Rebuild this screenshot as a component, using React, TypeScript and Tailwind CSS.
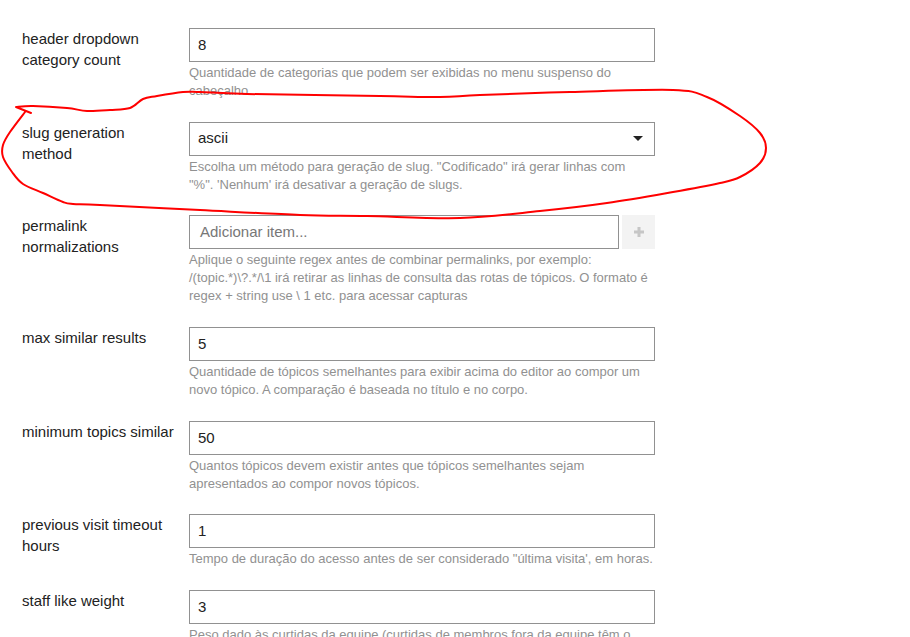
import { ReactNode } from "react";

type Setting = {
  label: string;
  description: ReactNode;
  kind: "text" | "select" | "list";
  value?: string;
  placeholder?: string;
};

const settings: Setting[] = [
  {
    label: "header dropdown category count",
    kind: "text",
    value: "8",
    description: "Quantidade de categorias que podem ser exibidas no menu suspenso do cabeçalho.",
  },
  {
    label: "slug generation method",
    kind: "select",
    value: "ascii",
    description: (
      <>
        Escolha um método para geração de slug. "Codificado" irá gerar linhas com
        <br />
        "%". 'Nenhum' irá desativar a geração de slugs.
      </>
    ),
  },
  {
    label: "permalink normalizations",
    kind: "list",
    placeholder: "Adicionar item...",
    description:
      "Aplique o seguinte regex antes de combinar permalinks, por exemplo: /(topic.*)\\?.*/\\1 irá retirar as linhas de consulta das rotas de tópicos. O formato é regex + string use \\ 1 etc. para acessar capturas",
  },
  {
    label: "max similar results",
    kind: "text",
    value: "5",
    description:
      "Quantidade de tópicos semelhantes para exibir acima do editor ao compor um novo tópico. A comparação é baseada no título e no corpo.",
  },
  {
    label: "minimum topics similar",
    kind: "text",
    value: "50",
    description: "Quantos tópicos devem existir antes que tópicos semelhantes sejam apresentados ao compor novos tópicos.",
  },
  {
    label: "previous visit timeout hours",
    kind: "text",
    value: "1",
    description: "Tempo de duração do acesso antes de ser considerado \"última visita', em horas.",
  },
  {
    label: "staff like weight",
    kind: "text",
    value: "3",
    description: "Peso dado às curtidas da equipe (curtidas de membros fora da equipe têm o peso 1.)",
  },
];

// hand-drawn red loop around the slug setting
const loop: [number, number][] = [
  [16, 107], [33, 106], [67, 108], [87, 111], [110, 110], [130, 108], [143, 99], [157, 96],
  [183, 92], [200, 92], [247, 94], [380, 96], [440, 97], [480, 95], [570, 92], [673, 90],
  [707, 97], [740, 116], [760, 133], [766, 148], [760, 163], [740, 177], [720, 183], [673, 192],
  [607, 203], [540, 211], [460, 218], [367, 216], [300, 215], [200, 210], [100, 205], [73, 204],
  [63, 202], [43, 193], [23, 184], [12, 172], [3, 157], [3, 145], [10, 132], [25, 112],
];

const smoothPath = (pts: [number, number][]) => {
  let d = `M31 113 L${pts[0][0]} ${pts[0][1]}`;
  for (let i = 0; i < pts.length - 1; i++) {
    const p0 = pts[i - 1] || pts[i];
    const p1 = pts[i];
    const p2 = pts[i + 1];
    const p3 = pts[i + 2] || p2;
    const c1x = p1[0] + (p2[0] - p0[0]) / 6;
    const c1y = p1[1] + (p2[1] - p0[1]) / 6;
    const c2x = p2[0] - (p3[0] - p1[0]) / 6;
    const c2y = p2[1] - (p3[1] - p1[1]) / 6;
    d += ` C${c1x.toFixed(1)} ${c1y.toFixed(1)} ${c2x.toFixed(1)} ${c2y.toFixed(1)} ${p2[0]} ${p2[1]}`;
  }
  return d;
};

const Field = ({ s }: { s: Setting }): ReactNode => {
  if (s.kind === "select") {
    return (
      <div className="h-[34px] border border-[#919191] bg-white flex items-center justify-between pl-[8px] pr-[11px] text-[15px] text-[#222]">
        <span>{s.value}</span>
        <span className="w-0 h-0 border-l-[5px] border-r-[5px] border-t-[5px] border-l-transparent border-r-transparent border-t-[#222]" />
      </div>
    );
  }
  if (s.kind === "list") {
    return (
      <div className="flex gap-[3px]">
        <div className="flex-1 h-[34px] border border-[#919191] bg-white flex items-center pl-[10px] text-[15px] text-[#777]">
          {s.placeholder}
        </div>
        <div className="w-[33px] h-[34px] bg-[#f3f3f3] flex items-center justify-center">
          <svg width="12" height="12" viewBox="0 0 12 12">
            <path d="M6 1v10M1 6h10" stroke="#c6c6c6" strokeWidth="3" />
          </svg>
        </div>
      </div>
    );
  }
  return (
    <div className="h-[34px] border border-[#919191] bg-white flex items-center pl-[8px] text-[15px] text-[#222]">
      {s.value}
    </div>
  );
};

export default function App() {
  return (
    <div className="relative w-[910px] h-[637px] overflow-hidden bg-white font-['Liberation_Sans',Arial,sans-serif]">
      <div className="pt-[28px] pl-[22px] flex flex-col">
        {settings.map((s) => (
          <div key={s.label} className="flex mb-[21.7px]">
            <div className="w-[167px] shrink-0 pr-[12px] text-[15px] leading-[21px] text-[#222]">{s.label}</div>
            <div className="w-[466px]">
              <Field s={s} />
              <p className="mt-[2px] text-[13px] leading-[18px] text-[#919191]">{s.description}</p>
            </div>
          </div>
        ))}
      </div>
      <svg className="absolute inset-0 pointer-events-none" width="910" height="637">
        <path d={smoothPath(loop)} fill="none" stroke="#ff0000" strokeWidth="2" strokeLinecap="round" strokeLinejoin="round" />
      </svg>
    </div>
  );
}
